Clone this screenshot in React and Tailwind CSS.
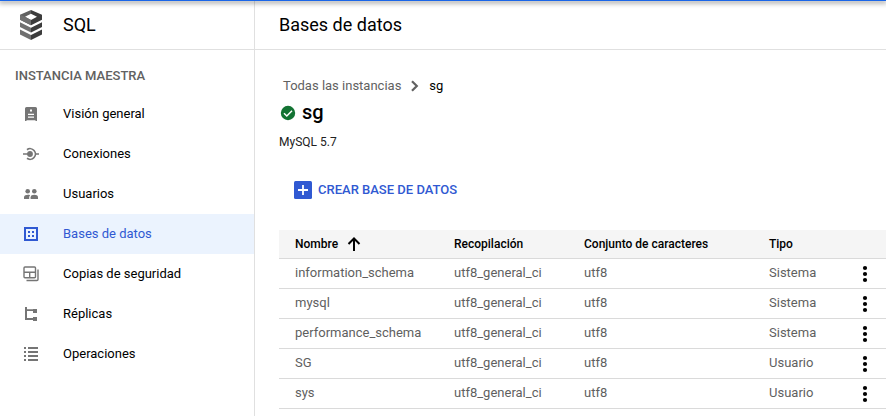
const navItems = [
  { label: "Visión general", icon: OverviewIcon },
  { label: "Conexiones", icon: ConnectionsIcon },
  { label: "Usuarios", icon: UsersIcon },
  { label: "Bases de datos", icon: DatabasesIcon, active: true },
  { label: "Copias de seguridad", icon: BackupsIcon },
  { label: "Réplicas", icon: ReplicasIcon },
  { label: "Operaciones", icon: OperationsIcon },
];

const databases = [
  { name: "information_schema", collation: "utf8_general_ci", charset: "utf8", type: "Sistema" },
  { name: "mysql", collation: "utf8_general_ci", charset: "utf8", type: "Sistema" },
  { name: "performance_schema", collation: "utf8_general_ci", charset: "utf8", type: "Sistema" },
  { name: "SG", collation: "utf8_general_ci", charset: "utf8", type: "Usuario" },
  { name: "sys", collation: "utf8_general_ci", charset: "utf8", type: "Usuario" },
];

function Icon({ children }) {
  return (
    <svg viewBox="0 0 24 24" className="size-6 shrink-0" fill="currentColor" aria-hidden="true">
      {children}
    </svg>
  );
}

function OverviewIcon() {
  return (
    <Icon>
      <path
        fillRule="evenodd"
        d="M7.500 5h9A1.500 1.500 0 0 1 18 6.500V19h-1.500v-.7h-9v.7H6V6.500A1.500 1.500 0 0 1 7.500 5zM11 7.500v2h2v-2zM9 11.800v1.200h6v-1.200zM9 14.500v1.200h6v-1.200z"
      />
    </Icon>
  );
}

function ConnectionsIcon() {
  return (
    <Icon>
      <circle cx="11" cy="12" r="2.900" />
      <path d="M4 11.200h7v1.600H4zM16.500 11.200H20v1.600h-3.500z" />
      <path
        d="M8 7.700A5.300 5.300 0 1 1 8 16.300"
        fill="none"
        stroke="currentColor"
        strokeWidth="1.700"
      />
    </Icon>
  );
}

function UsersIcon() {
  return (
    <Icon>
      <circle cx="8.700" cy="9.200" r="2.300" />
      <circle cx="15.300" cy="9.200" r="2.300" />
      <path d="M5 17v-1.800c0-1.600 2.200-2.400 4-2.400 .7 0 1.500.1 2.200.4-.7.500-1 1.200-1 2V17z" />
      <path d="M11.600 17v-1.800c0-1.600 1.900-2.400 3.700-2.400s3.700.8 3.700 2.400V17z" />
    </Icon>
  );
}

function DatabasesIcon() {
  return (
    <Icon>
      <path
        fillRule="evenodd"
        d="M5 5h14v14H5zM7 7v10h10V7z"
      />
      <path d="M9 9h2v2H9zM13 9h2v2h-2zM9 13h2v2H9zM13 13h2v2h-2z" />
    </Icon>
  );
}

function BackupsIcon() {
  return (
    <Icon>
      <g fill="none" stroke="currentColor" strokeWidth="1.400">
        <rect x="5" y="5" width="11.500" height="10.800" rx="1" />
        <path d="M5 10.300h11.500M10.700 10.300v5.500M19 7.500V17.500a1 1 0 0 1-1 1H7.500" />
      </g>
    </Icon>
  );
}

function ReplicasIcon() {
  return (
    <Icon>
      <path d="M6 5h2v2.300h6V7h4v4h-4V9H8v7h6v-1h4v4h-4v-1H6z" />
    </Icon>
  );
}

function OperationsIcon() {
  return (
    <Icon>
      <path d="M5 5h2v2H5zM9 5h10v2H9zM5 9h2v2H5zM9 9h10v2H9zM5 13h2v2H5zM9 13h10v2H9zM5 17h2v2H5zM9 17h10v2H9z" />
    </Icon>
  );
}

function SqlLogo() {
  return (
    <svg viewBox="0 0 22 30" className="h-[30px] w-[22px] shrink-0" aria-hidden="true">
      <path fill="#3c3c3c" d="M11 0L22 4.800v5L11 15.200V10L17 6.700 11 3.700z" />
      <path fill="#606060" d="M0 4.800L11 0v3.700L5 6.700 11 10v5.200L0 9.800z" />
      <path fill="#707070" d="M0 4.800L5 6.700 11 10v5.200L0 9.800z" />
      <path fill="#707070" d="M0 12.300l11 5.400V22.500L0 17.100zM0 19.600l11 5.400V30L0 24.600z" />
      <path fill="#3c3c3c" d="M22 12.300l-11 5.400V22.500l11-5.400zM22 19.600l-11 5.400V30l11-5.400z" />
    </svg>
  );
}

function Sidebar() {
  return (
    <aside className="w-[255px] shrink-0 border-r border-[#e0e0e0]">
      <div className="flex h-[50px] items-center gap-[21px] border-b border-[#e0e0e0] pl-5">
        <SqlLogo />
        <span className="text-lg">SQL</span>
      </div>
      <h2 className="px-[15px] pt-4 pb-2 text-[13px] leading-5 font-medium text-[#616161]">
        INSTANCIA MAESTRA
      </h2>
      <nav>
        <ul>
          {navItems.map(({ label, icon: NavIcon, active }) => (
            <li key={label}>
              <a
                href="#"
                aria-current={active ? "page" : undefined}
                className={
                  active
                    ? "flex h-10 items-center gap-5 bg-[#ebf3fe] pl-[19px] text-[#3059d2]"
                    : "flex h-10 items-center gap-5 pl-[19px]"
                }
              >
                <span className={active ? "text-[#3059d2]" : "text-[#757575]"}>
                  <NavIcon />
                </span>
                {label}
              </a>
            </li>
          ))}
        </ul>
      </nav>
    </aside>
  );
}

function DatabaseTable() {
  return (
    <table className="w-full table-fixed border-collapse text-left">
      <colgroup>
        <col className="w-[159px]" />
        <col className="w-[130px]" />
        <col className="w-[185px]" />
        <col />
        <col className="w-[42px]" />
      </colgroup>
      <thead className="bg-[#f5f5f5] text-xs">
        <tr className="h-7 border-b border-[#dadada]">
          <th className="pl-4 font-medium" aria-sort="ascending">
            <button type="button" className="flex items-center gap-2">
              Nombre
              <svg viewBox="0 0 16 16" className="size-4" fill="none" stroke="currentColor" strokeWidth="2" aria-hidden="true">
                <path d="M8 15V3M2.500 8L8 2.500 13.500 8" />
              </svg>
            </button>
          </th>
          <th className="pl-4 font-medium">Recopilación</th>
          <th className="pl-4 font-medium">Conjunto de caracteres</th>
          <th className="pl-4 font-medium">Tipo</th>
          <td />
        </tr>
      </thead>
      <tbody className="text-[#5f5f5f]">
        {databases.map((db) => (
          <tr key={db.name} className="h-[30px] border-b border-[#dadada]">
            <td className="pl-4">{db.name}</td>
            <td className="pl-4">{db.collation}</td>
            <td className="pl-4">{db.charset}</td>
            <td className="pl-4">{db.type}</td>
            <td className="pt-0.5">
              <button type="button" aria-label={`Acciones de ${db.name}`} className="mx-auto block text-black">
                <svg viewBox="0 0 8 18" className="h-[18px] w-2" fill="currentColor" aria-hidden="true">
                  <circle cx="4" cy="3" r="2.100" />
                  <circle cx="4" cy="9" r="2.100" />
                  <circle cx="4" cy="15" r="2.100" />
                </svg>
              </button>
            </td>
          </tr>
        ))}
      </tbody>
    </table>
  );
}

export default function App() {
  return (
    <div className="relative flex min-h-screen bg-white font-[Roboto,sans-serif] text-[13px] leading-5 text-black">
      <div className="absolute inset-x-0 top-0 h-px bg-[#1a66e8] shadow-[0_1px_5px_1px_rgba(0,0,0,0.45)]" />
      <Sidebar />
      <main className="min-w-0 flex-1">
        <header className="flex h-[50px] items-center border-b border-[#e0e0e0] px-6">
          <h1 className="text-lg">Bases de datos</h1>
        </header>
        <div className="pt-[26px] pl-6">
          <nav className="flex items-center gap-2 pl-1" aria-label="Ruta">
            <a href="#" className="text-[#616161]">Todas las instancias</a>
            <svg viewBox="0 0 12 12" className="size-3" fill="none" stroke="#616161" strokeWidth="2.200" aria-hidden="true">
              <path d="M3 1.200L7.800 6 3 10.800" />
            </svg>
            <span>sg</span>
          </nav>
          <div className="mt-1 flex items-center gap-[5px]">
            <svg viewBox="0 0 18 18" className="size-[18px]" aria-hidden="true">
              <circle cx="9" cy="10" r="7.200" fill="#137333" />
              <path d="M5 10.300l2.800 2.700L13 7.800" fill="none" stroke="#fff" strokeWidth="1.500" />
            </svg>
            <h2 className="text-xl leading-6 font-medium">sg</h2>
          </div>
          <p className="mt-2 text-xs leading-5 text-[#212121]">MySQL 5.7</p>
          <button type="button" className="mt-7 ml-[15px] flex items-center gap-1.5 font-medium text-[#3059d2]">
            <svg viewBox="0 0 18 18" className="size-[18px]" aria-hidden="true">
              <rect width="18" height="18" rx="1.500" fill="#3059d2" />
              <path d="M9 4v10M4 9h10" stroke="#fff" strokeWidth="1.800" />
            </svg>
            CREAR BASE DE DATOS
          </button>
          <div className="mt-[30px]">
            <DatabaseTable />
          </div>
        </div>
      </main>
    </div>
  );
}
